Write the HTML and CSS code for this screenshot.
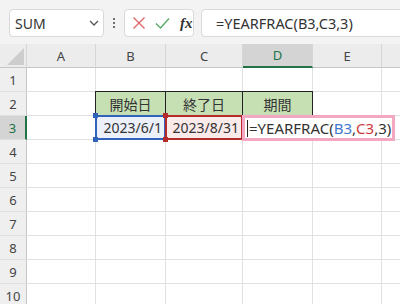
FILE: index.html
```html
<!DOCTYPE html>
<html lang="ja">
<head>
<meta charset="utf-8">
<link rel="stylesheet" href="styles.css">
</head>
<body>
<div class="app">
  <div class="toolbar">
    <div class="namebox">
      <span class="nb-text">SUM</span>
      <svg class="chev" width="10" height="6" viewBox="0 0 10 6"><path d="M1 1 L5 5 L9 1" fill="none" stroke="#555" stroke-width="1.3"/></svg>
    </div>
    <div class="dots"><span></span><span></span><span></span></div>
    <div class="fnbox">
      <svg class="ico" width="14" height="14" viewBox="0 0 14 14"><path d="M1.5 1.5 L12.5 12.5 M12.5 1.5 L1.5 12.5" stroke="#e06a6a" stroke-width="1.4" fill="none"/></svg>
      <svg class="ico" width="15" height="12" viewBox="0 0 15 12"><path d="M1 6.5 L5.5 11 L14 1.5" stroke="#5aab6b" stroke-width="1.4" fill="none"/></svg>
      <span class="fx">fx</span>
    </div>
    <div class="formula">=YEARFRAC(B3,C3,3)</div>
  </div>
  <div class="sheet">
    <div class="row hdr">
      <div class="c rh corner"><span class="tri"></span></div>
      <div class="c ca ch">A</div>
      <div class="c cb ch">B</div>
      <div class="c cc ch">C</div>
      <div class="c cd ch sel">D</div>
      <div class="c ce ch">E</div>
      <div class="c cf ch"></div>
    </div>
    <div class="row">
      <div class="c rh">1</div>
      <div class="c ca"></div><div class="c cb"></div><div class="c cc"></div><div class="c cd"></div><div class="c ce"></div><div class="c cf"></div>
    </div>
    <div class="row">
      <div class="c rh">2</div>
      <div class="c ca"></div>
      <div class="c cb lab first">開始日</div>
      <div class="c cc lab">終了日</div>
      <div class="c cd lab">期間</div>
      <div class="c ce"></div><div class="c cf"></div>
    </div>
    <div class="row">
      <div class="c rh sel">3</div>
      <div class="c ca"></div>
      <div class="c cb date refb">2023/6/1<i class="h tl"></i><i class="h bl"></i></div>
      <div class="c cc date refc">2023/8/31<i class="h tl"></i><i class="h bl"></i></div>
      <div class="c cd edit"><div class="editor"><span class="caret"></span>=YEARFRAC(<span class="rb">B3</span>,<span class="rc">C3</span>,3)</div></div>
      <div class="c ce"></div><div class="c cf"></div>
    </div>
    <div class="row"><div class="c rh">4</div><div class="c ca"></div><div class="c cb"></div><div class="c cc"></div><div class="c cd"></div><div class="c ce"></div><div class="c cf"></div></div>
    <div class="row"><div class="c rh">5</div><div class="c ca"></div><div class="c cb"></div><div class="c cc"></div><div class="c cd"></div><div class="c ce"></div><div class="c cf"></div></div>
    <div class="row"><div class="c rh">6</div><div class="c ca"></div><div class="c cb"></div><div class="c cc"></div><div class="c cd"></div><div class="c ce"></div><div class="c cf"></div></div>
    <div class="row"><div class="c rh">7</div><div class="c ca"></div><div class="c cb"></div><div class="c cc"></div><div class="c cd"></div><div class="c ce"></div><div class="c cf"></div></div>
    <div class="row"><div class="c rh">8</div><div class="c ca"></div><div class="c cb"></div><div class="c cc"></div><div class="c cd"></div><div class="c ce"></div><div class="c cf"></div></div>
    <div class="row"><div class="c rh">9</div><div class="c ca"></div><div class="c cb"></div><div class="c cc"></div><div class="c cd"></div><div class="c ce"></div><div class="c cf"></div></div>
    <div class="row"><div class="c rh">10</div><div class="c ca"></div><div class="c cb"></div><div class="c cc"></div><div class="c cd"></div><div class="c ce"></div><div class="c cf"></div></div>
  </div>
</div>
</body>
</html>
```

FILE: styles.css
```css
html, body {
  margin: 0;
  padding: 0;
  background: #ffffff;
}
.app {
  width: 400px;
  height: 304px;
  overflow: hidden;
  font-family: "Noto Sans", "Noto Sans CJK JP", sans-serif;
  color: #333;
}
.toolbar {
  height: 44px;
  box-sizing: border-box;
  background: #f3f3f3;
  display: flex;
  align-items: flex-start;
  padding-top: 9px;
  padding-left: 9px;
}
.namebox, .fnbox, .formula {
  height: 28px;
  box-sizing: border-box;
  background: #ffffff;
  border: 1px solid #d9d9d9;
  border-radius: 4px;
  display: flex;
  align-items: center;
}
.namebox {
  width: 95px;
  padding-left: 5px;
  justify-content: space-between;
  padding-right: 4px;
}
.nb-text {
  font-size: 14px;
  color: #333;
}
.dots {
  width: 20px;
  height: 28px;
  display: flex;
  flex-direction: column;
  align-items: center;
  justify-content: center;
  gap: 2px;
}
.dots span {
  width: 2px;
  height: 2px;
  background: #444;
  border-radius: 1px;
}
.fnbox {
  width: 70px;
  padding-left: 7px;
  gap: 9px;
}
.fx {
  font-family: "Liberation Serif", serif;
  font-style: italic;
  font-weight: bold;
  font-size: 15px;
  color: #333;
  margin-left: 1px;
}
.formula {
  flex: 1;
  margin-left: 7px;
  margin-right: -10px;
  padding-left: 14px;
  font-size: 14.5px;
  color: #333;
}
.sheet {
  display: flex;
  flex-direction: column;
}
.row {
  display: flex;
  height: 24px;
}
.c {
  box-sizing: border-box;
  height: 24px;
  border-right: 1px solid #e1e1e1;
  border-bottom: 1px solid #e1e1e1;
  flex: none;
  position: relative;
  font-size: 14px;
  display: flex;
  align-items: center;
  white-space: nowrap;
}
.rh {
  width: 27px;
  background: #efefef;
  border-right: 1px solid #c6c6c6;
  justify-content: center;
  color: #444;
  font-size: 13px;
}
.ca { width: 69px; }
.cb { width: 70px; }
.cc { width: 77px; }
.cd { width: 70px; }
.ce { width: 69px; }
.cf { width: 30px; }
.hdr .c {
  background: #ececec;
  border-bottom: 1px solid #c6c6c6;
  border-right: 1px solid #d6d6d6;
}
.ch {
  justify-content: center;
  font-size: 13px;
  color: #444;
}
.hdr .sel {
  background: #d4d4d4;
  border-bottom: 2px solid #217346;
  color: #217346;
}
.rh.sel {
  background: #d4d4d4;
  border-right: 2px solid #217346;
  color: #217346;
}
.corner .tri {
  position: absolute;
  right: 2px;
  bottom: 2px;
  width: 0;
  height: 0;
  border-left: 17px solid transparent;
  border-bottom: 17px solid #cdcdcd;
}
.lab {
  background: #c6e0b4;
  border-top: 1px solid #222;
  border-right: 1px solid #222;
  border-bottom: 1px solid #222;
  justify-content: center;
  color: #333;
  margin-top: -1px;
  height: 25px;
}
.lab.first {
  border-left: 1px solid #222;
  margin-left: -1px;
  width: 71px;
}
.date {
  justify-content: flex-end;
  padding-right: 3px;
  color: #333;
}
.refb {
  background: #ebf0fa;
}
.refb::after {
  content: "";
  position: absolute;
  left: -1px;
  top: -1px;
  right: -1px;
  bottom: -1px;
  border: 2px solid #2f62b8;
}
.refc {
  background: #fbeaea;
}
.refc::after {
  content: "";
  position: absolute;
  left: -1px;
  top: -1px;
  right: -1px;
  bottom: -1px;
  border: 2px solid #b52a2a;
}
.h {
  position: absolute;
  width: 5px;
  height: 5px;
  z-index: 3;
}
.refb .h { background: #2f62b8; }
.refc .h { background: #b52a2a; }
.h.tl { left: -3px; top: -3px; }
.h.bl { left: -3px; bottom: -3px; }
.edit {
  z-index: 4;
}
.editor {
  position: absolute;
  left: -1px;
  top: -1px;
  width: 153px;
  height: 26px;
  box-sizing: border-box;
  border: 3px solid #f4a7c2;
  background: #ffffff;
  display: flex;
  align-items: center;
  padding-left: 2px;
  font-size: 15px;
  color: #333;
}
.caret {
  width: 1px;
  height: 17px;
  background: #222;
  margin-right: 1px;
}
.rb { color: #3f78cf; }
.rc { color: #cc3b3b; }
```
